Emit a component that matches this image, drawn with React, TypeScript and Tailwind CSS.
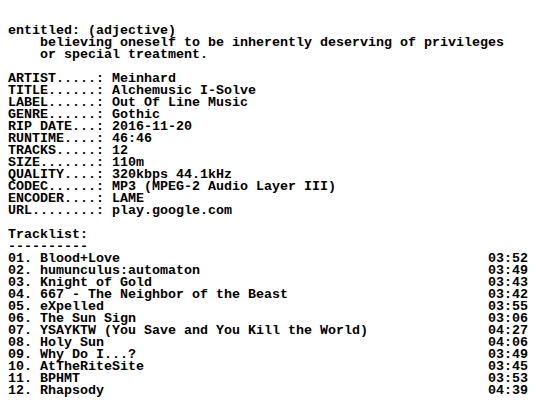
import React from "react";

const info: [string, string][] = [
  ["ARTIST", "Meinhard"],
  ["TITLE", "Alchemusic I-Solve"],
  ["LABEL", "Out Of Line Music"],
  ["GENRE", "Gothic"],
  ["RIP DATE", "2016-11-20"],
  ["RUNTIME", "46:46"],
  ["TRACKS", "12"],
  ["SIZE", "110m"],
  ["QUALITY", "320kbps 44.1kHz"],
  ["CODEC", "MP3 (MPEG-2 Audio Layer III)"],
  ["ENCODER", "LAME"],
  ["URL", "play.google.com"],
];

const tracks: [string, string][] = [
  ["Blood+Love", "03:52"],
  ["humunculus:automaton", "03:49"],
  ["Knight of Gold", "03:43"],
  ["667 - The Neighbor of the Beast", "03:42"],
  ["eXpelled", "03:55"],
  ["The Sun Sign", "03:06"],
  ["YSAYKTW (You Save and You Kill the World)", "04:27"],
  ["Holy Sun", "04:06"],
  ["Why Do I...?", "03:49"],
  ["AtTheRiteSite", "03:45"],
  ["BPHMT", "03:53"],
  ["Rhapsody", "04:39"],
];

export default function App() {
  const lines: string[] = [
    "entitled: (adjective)",
    "    believing oneself to be inherently deserving of privileges",
    "    or special treatment.",
    "",
    ...info.map(([k, v]) => (k + ".").padEnd(11, ".") + ": " + v),
    "",
    "Tracklist:",
    "----------",
    ...tracks.map(
      ([t, d], i) => (String(i + 1).padStart(2, "0") + ". " + t).padEnd(60, " ") + d
    ),
  ];
  return (
    <div className="w-[536px] h-[420px] bg-white overflow-hidden">
      <pre
        className="m-0 pl-[8px] pt-[25px] text-black font-bold text-[13.333px] leading-[12px] whitespace-pre"
        style={{ fontFamily: '"Liberation Mono", "DejaVu Sans Mono", monospace' }}
      >
        {lines.join("\n")}
      </pre>
    </div>
  );
}
